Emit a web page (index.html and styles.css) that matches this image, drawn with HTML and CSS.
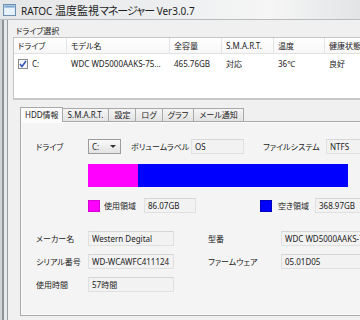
FILE: index.html
```html
<!DOCTYPE html>
<html lang="ja">
<head>
<meta charset="utf-8">
<link rel="stylesheet" href="styles.css">
</head>
<body>
<div class="window">
  <div class="titlebar">
    <svg class="appicon" width="13" height="12" viewBox="0 0 13 12"><rect x="0.5" y="0.5" width="12" height="11" fill="#cfe3f5" stroke="#6f8fb0"/><rect x="1.5" y="1.5" width="10" height="2" fill="#7fa8d0"/><rect x="1.5" y="4" width="10" height="7" fill="#e8f2fb"/></svg>
    <span class="title">RATOC <span class="tj">温度監視<span class="tk">マネージャー</span></span> Ver3.0.7</span>
  </div>
  <div class="frame">
    <div class="frame-left"></div>
    <div class="client">
      <div class="group-label">ドライブ選択</div>
      <div class="list">
        <div class="lrow lhead">
          <div class="c c1">ドライブ</div>
          <div class="c c2">モデル名</div>
          <div class="c c3">全容量</div>
          <div class="c c4">S.M.A.R.T.</div>
          <div class="c c5">温度</div>
          <div class="c c6">健康状態</div>
        </div>
        <div class="lrow litem">
          <div class="c c1"><span class="check"><svg width="8" height="8" viewBox="0 0 8 8"><path d="M1 4 L3 6.5 L7 1" fill="none" stroke="#2a4fb5" stroke-width="1.4"/></svg></span>C:</div>
          <div class="c c2">WDC WD5000AAKS-75...</div>
          <div class="c c3">465.76GB</div>
          <div class="c c4">対応</div>
          <div class="c c5">36℃</div>
          <div class="c c6">良好</div>
        </div>
      </div>
      <div class="tabs">
        <div class="tabstrip">
          <div class="tab active">HDD情報</div>
          <div class="tab">S.M.A.R.T.</div>
          <div class="tab">設定</div>
          <div class="tab">ログ</div>
          <div class="tab">グラフ</div>
          <div class="tab">メール通知</div>
        </div>
        <div class="panel">
          <div class="prow r1">
            <div class="lbl">ドライブ</div>
            <div class="combo"><span>C:</span><span class="arrow"></span></div>
            <div class="lbl vol">ボリュームラベル</div>
            <div class="box os">OS</div>
            <div class="lbl fs">ファイルシステム</div>
            <div class="box fsb">NTFS</div>
          </div>
          <div class="prow r2">
            <div class="bar"><div class="used" style="width:50px"></div><div class="free"></div></div>
          </div>
          <div class="prow r3">
            <span class="sw mag"></span><div class="lbl leg">使用領域</div>
            <div class="box vbox">86.07GB</div>
            <span class="sw blu"></span><div class="lbl leg2">空き領域</div>
            <div class="box vbox2">368.97GB</div>
          </div>
          <div class="prow r4">
            <div class="lbl">メーカー名</div>
            <div class="box wide">Western Degital</div>
            <div class="lbl rl">型番</div>
            <div class="box wide2">WDC WD5000AAKS-75</div>
          </div>
          <div class="prow r5">
            <div class="lbl">シリアル番号</div>
            <div class="box wide">WD-WCAWFC411124</div>
            <div class="lbl rl">ファームウェア</div>
            <div class="box wide2">05.01D05</div>
          </div>
          <div class="prow r6">
            <div class="lbl">使用時間</div>
            <div class="box wide">57時間</div>
          </div>
        </div>
      </div>
    </div>
  </div>
</div>
</body>
</html>
```

FILE: styles.css
```css
* { box-sizing: border-box; }
html, body { margin: 0; padding: 0; }
body {
  width: 360px; height: 320px; overflow: hidden;
  font-family: "Noto Sans", "Noto Sans CJK JP", sans-serif;
  font-feature-settings: "palt" 1;
  font-size: 8px; color: #222;
  background: #f0f0f0;
}
.window { width: 360px; height: 320px; overflow: hidden; display: flex; flex-direction: column; }
.titlebar {
  height: 20px; flex: none;
  display: flex; align-items: center; gap: 5px; padding-left: 3px;
  background: linear-gradient(90deg, #e4e6e8 0%, #eceeef 45%, #f6f6f6 75%, #e2e4e6 100%);
  border-bottom: 1px solid #b9bcbf;
}
.appicon { flex: none; }
.title { font-size: 10px; color: #1e1e1e; white-space: nowrap; }
.tj { font-size: 11px; }
.tk { letter-spacing: -1px; }
.frame { flex: 1; display: flex; }
.frame-left {
  width: 8px; flex: none;
  background: #e6e8ea;
  border-left: 2px solid #d0d3d6;
  border-right: 1px solid #9a9da0;
  box-shadow: inset 2px 0 0 #8f9296;
}
.client { flex: 1; padding: 4px 0 0 5px; background: #f0f0f0; }
.group-label { height: 13px; line-height: 13px; padding-left: 3px; color: #222; }
.list {
  height: 63px; background: #fff;
  border: 1px solid #c4c4c4; border-right: none; border-bottom: 2px solid #c8c8c8;
}
.lrow { display: flex; height: 15px; align-items: center; white-space: nowrap; }
.lhead { border-bottom: 1px solid #e2e2e2; height: 16px; background: linear-gradient(#ffffff, #f7f7f7); }
.lhead .c { border-right: 1px solid #e4e4e4; height: 100%; display: flex; align-items: center; }
.litem { margin-top: 2px; }
.c { padding-left: 4px; overflow: hidden; flex: none; }
.c1 { width: 53px; display: flex; align-items: center; }
.c2 { width: 103px; }
.c3 { width: 52px; }
.c4 { width: 52px; }
.c5 { width: 51px; }
.c6 { width: 60px; }
.check {
  width: 10px; height: 10px; border: 1px solid #8a8a8a; background: #f4f6fa;
  display: inline-flex; align-items: center; justify-content: center; margin-right: 4px;
}
.check svg { display: block; }
.tabs { margin: 7px 0 0 7px; }
.tabstrip { display: flex; height: 14px; align-items: flex-end; }
.tab {
  height: 13px; line-height: 12px; padding: 0 5px;
  border: 1px solid #a9a9a9; border-bottom: none; margin-right: -1px;
  background: linear-gradient(#f5f5f5, #e3e3e3);
  white-space: nowrap;
}
.tab.active { height: 15px; background: #fbfbfb; position: relative; z-index: 1; margin-bottom: -1px; padding: 0 3px 0 4px; line-height: 14px; }
.panel {
  height: 195px; border: 1px solid #a9a9a9; border-right: none;
  background: #f4f4f4; padding: 17px 0 0 15px;
  box-shadow: inset 0 0 0 1px #fbfbfb;
}
.prow { display: flex; align-items: center; white-space: nowrap; }
.lbl { width: 52px; flex: none; }
.box {
  height: 15px; line-height: 13px; padding-left: 3px;
  border: 1px solid #e0e0e0; border-top-color: #d6d6d6; background: #f2f2f2; flex: none; overflow: hidden;
}
.combo {
  width: 33px; height: 15px; flex: none; border: 1px solid #9c9c9c;
  background: linear-gradient(#fafafa, #e2e2e2);
  display: flex; align-items: center; justify-content: space-between; padding: 0 4px 0 3px;
}
.arrow { width: 0; height: 0; border-left: 3px solid transparent; border-right: 3px solid transparent; border-top: 3px solid #333; }
.lbl.vol { width: 60px; margin-left: 10px; }
.box.os { width: 53px; }
.lbl.fs { width: 63px; margin-left: 19px; }
.box.fsb { width: 40px; }
.r1 { height: 15px; }
.r2 { margin-top: 10px; padding-left: 52px; }
.bar { display: flex; height: 23px; width: 260px; }
.used { background: #ff00ff; }
.free { flex: 1; background: #0000ff; }
.r3 { margin-top: 11px; padding-left: 52px; height: 15px; }
.sw { width: 12px; height: 12px; flex: none; }
.mag { background: #ff00ff; border: 1px solid #d000d0; }
.blu { background: #0000ff; border: 1px solid #0000c0; }
.lbl.leg { width: 40px; margin-left: 4px; }
.box.vbox { width: 52px; }
.lbl.leg2 { width: 37px; margin-left: 6px; }
.sw.blu { margin-left: 64px; }
.box.vbox2 { width: 50px; }
.r4 { margin-top: 18px; height: 15px; }
.r5 { margin-top: 8px; height: 15px; }
.r6 { margin-top: 8px; height: 15px; }
.box.wide { width: 86px; }
.lbl.rl { width: 73px; margin-left: 34px; }
.box.wide2 { width: 90px; }
```
